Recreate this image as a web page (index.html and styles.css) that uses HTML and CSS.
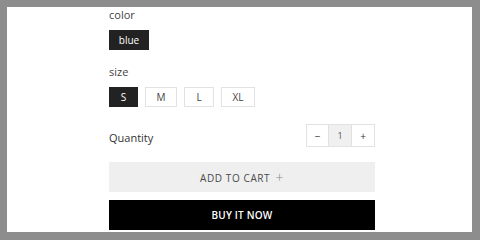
FILE: index.html
```
<!DOCTYPE html>
<html lang="en">
<head>
  <meta charset="UTF-8" />
  <title>Product options</title>
  <link rel="stylesheet" href="styles.css">
</head>
<body>
  <div class="frame">
    <div class="product-form">
      <div class="label">color</div>
      <div class="swatches">
        <button class="opt active opt-color">blue</button>
      </div>

      <div class="label label-size">size</div>
      <div class="swatches">
        <button class="opt active opt-s">S</button>
        <button class="opt opt-m">M</button>
        <button class="opt opt-l">L</button>
        <button class="opt opt-xl">XL</button>
      </div>

      <div class="qty-row">
        <span class="qty-label">Quantity</span>
        <div class="stepper">
          <button class="step">&minus;</button>
          <span class="qty-value">1</span>
          <button class="step">+</button>
        </div>
      </div>

      <button class="add-cart">ADD TO CART <span class="plus">+</span></button>
      <button class="buy-now">BUY IT NOW</button>
    </div>
  </div>
</body>
</html>
```

FILE: styles.css
```
body {
  margin: 0;
  background: #8d8d8d;
  font-family: "Open Sans", "Liberation Sans", sans-serif;
  color: #333;
}
.frame {
  margin: 7px 0 0 7px;
  width: 465px;
  height: 225px;
  background: #fff;
  overflow: hidden;
}
.product-form {
  margin-left: 102px;
  width: 266px;
}
.label {
  font-size: 11px;
  line-height: 15px;
  color: #444;
}
.swatches {
  display: flex;
  gap: 7px;
  margin-top: 8px;
}
.label-size {
  margin-top: 14px;
}
button {
  font-family: inherit;
  cursor: pointer;
}
.opt {
  height: 20px;
  padding: 0;
  border: 1px solid #e2e2e2;
  background: #fff;
  color: #444;
  font-size: 10px;
}
.opt.active {
  background: #222;
  border-color: #222;
  color: #fff;
}
.opt-color { width: 40px; }
.opt-s { width: 29px; }
.opt-m { width: 32px; }
.opt-l { width: 30px; }
.opt-xl { width: 34px; }
.qty-row {
  display: flex;
  justify-content: space-between;
  align-items: center;
  margin-top: 17px;
}
.qty-label {
  font-size: 11px;
  padding-top: 3px;
  color: #333;
}
.stepper {
  display: flex;
  height: 23px;
  border: 1px solid #e2e2e2;
  box-sizing: border-box;
}
.step {
  width: 21px;
  border: 0;
  padding: 0;
  background: #fff;
  color: #333;
  font-size: 10px;
}
.step:last-child {
  width: 22px;
}
.qty-value {
  width: 24px;
  background: #f0f0f0;
  border-left: 1px solid #e2e2e2;
  border-right: 1px solid #e2e2e2;
  box-sizing: border-box;
  display: flex;
  align-items: center;
  justify-content: center;
  font-size: 9px;
  color: #555;
}
.add-cart, .buy-now {
  display: block;
  width: 266px;
  height: 30px;
  border: 0;
  font-size: 10px;
}
.add-cart {
  margin-top: 15px;
  background: #efefef;
  color: #4a4a4a;
  letter-spacing: 0.6px;
}
.plus {
  font-size: 14px;
  font-weight: 300;
  color: #888;
  margin-left: 2px;
  vertical-align: -1px;
}
.buy-now {
  margin-top: 8px;
  background: #000;
  color: #fff;
  font-weight: 600;
  letter-spacing: 0.2px;
}
```
